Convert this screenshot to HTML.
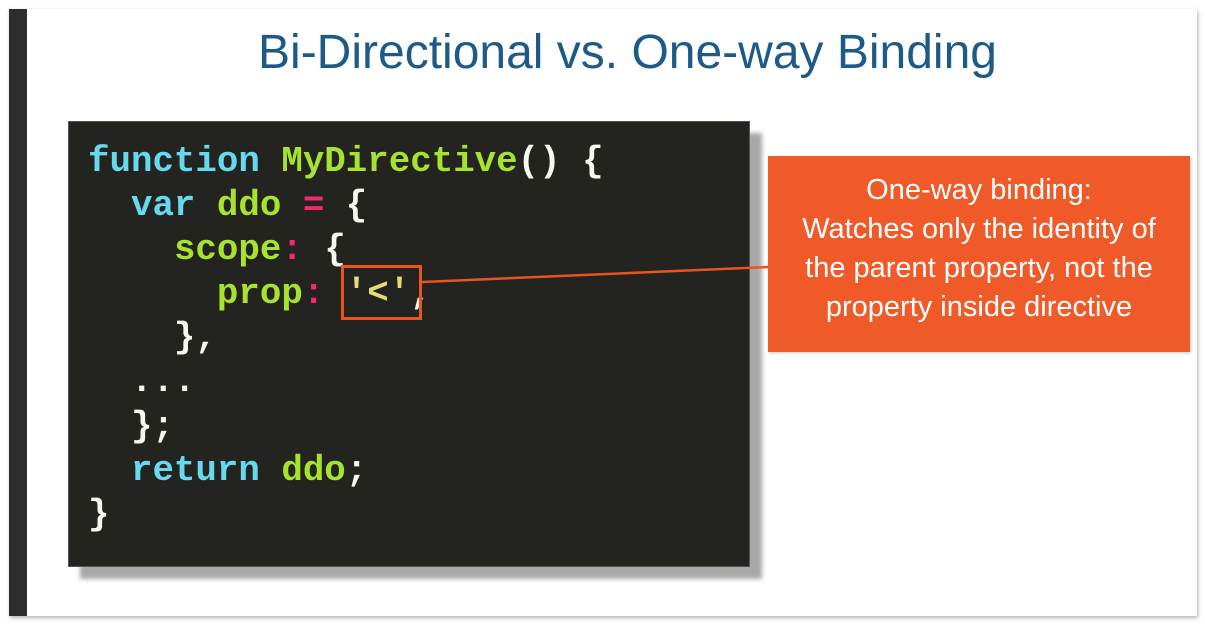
<!DOCTYPE html>
<html><head><style>
html,body{margin:0;padding:0;width:1205px;height:641px;background:#fff;overflow:hidden;position:relative}
.frame{position:absolute;left:9px;top:9px;width:1188px;height:607px;background:#fefefe;box-shadow:1px 2px 4px rgba(0,0,0,.3)}
.strip{position:absolute;left:9px;top:9px;width:18px;height:607px;background:#2d2d2d}
.title{position:absolute;left:27px;width:1200px;top:25px;text-align:center;font:48px "Liberation Sans",sans-serif;color:#1d5a88}
.shadow{position:absolute;left:80px;top:133px;width:682px;height:446px;background:#a8a8a8;filter:blur(2px)}
.code{position:absolute;left:68px;top:121px;width:682px;height:446px;background:#23231f;border:1px solid #555;box-sizing:border-box}
pre{margin:0;position:absolute;left:88px;top:140px;font:bold 35.8px/44.1px "Liberation Mono",monospace;color:#f8f8f2}
.c{color:#66d9ef}.g{color:#a6e22e}.p{color:#f92672}.y{color:#e6db74}
.hl{position:absolute;left:341px;top:265px;width:81px;height:55px;border:3px solid #e9541f;box-sizing:border-box}
.box{position:absolute;left:768px;top:156px;width:422px;height:196px;background:#f05a28;color:#fff;font:29px/39px "Liberation Sans",sans-serif;text-align:center;box-sizing:border-box;padding-top:15px;box-shadow:1px 1px 3px rgba(0,0,0,.2);white-space:nowrap}
</style></head><body>
<div class="frame"></div>
<div class="strip"></div>
<div class="title" style="left:0;width:1255px">Bi-Directional vs. One-way Binding</div>
<div class="shadow"></div>
<div class="code"></div>
<pre><span class="c">function</span> <span class="g">MyDirective</span>() {
  <span class="c">var</span> <span class="g">ddo</span> <span class="p">=</span> {
    <span class="g">scope</span><span class="p">:</span> {
      <span class="g">prop</span><span class="p">:</span> <span class="y">'&lt;'</span>,
    },
  ...
  };
  <span class="c">return</span> <span class="g">ddo</span>;
}</pre>
<div class="hl"></div>
<svg style="position:absolute;left:0;top:0" width="1205" height="641"><line x1="422" y1="282" x2="768" y2="267" stroke="#e9541f" stroke-width="2.5"/></svg>
<div class="box">One-way binding:<br>Watches only the identity of<br>the parent property, not the<br>property inside directive</div>
</body></html>
